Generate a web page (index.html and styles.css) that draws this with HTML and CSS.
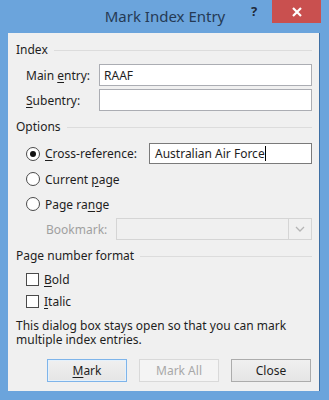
FILE: index.html
```html
<!DOCTYPE html>
<html>
<head>
<meta charset="utf-8">
<link rel="stylesheet" href="styles.css">
</head>
<body>
<div class="window">
  <div class="titlebar">
    <div class="title">Mark Index Entry</div>
    <div class="help">?</div>
    <div class="close">
      <svg width="12" height="10" viewBox="0 0 12 10"><path d="M2 1 L10 9 M10 1 L2 9" stroke="#fff" stroke-width="2.2" fill="none"/></svg>
    </div>
  </div>
  <div class="client">
    <div class="group"><span>Index</span><i class="rule"></i></div>
    <div class="row field first">
      <label class="lbl">Main <u>e</u>ntry:</label>
      <div class="input main">RAAF</div>
    </div>
    <div class="row field second">
      <label class="lbl"><u>S</u>ubentry:</label>
      <div class="input main"></div>
    </div>
    <div class="group options"><span>Options</span><i class="rule"></i></div>
    <div class="row xref">
      <span class="radio checked"></span>
      <span class="rtext"><u>C</u>ross-reference:</span>
      <div class="input xin">Australian Air Force<span class="caret"></span></div>
    </div>
    <div class="row opt cur">
      <span class="radio"></span>
      <span class="rtext">Current <u>p</u>age</span>
    </div>
    <div class="row opt range">
      <span class="radio"></span>
      <span class="rtext">Page ra<u>n</u>ge</span>
    </div>
    <div class="row bookmark">
      <span class="blabel">Bookmark:</span>
      <div class="select"><span class="arrow"><svg width="10" height="6" viewBox="0 0 10 6"><path d="M1 1 L5 5 L9 1" stroke="#b5b5b5" stroke-width="1.3" fill="none"/></svg></span></div>
    </div>
    <div class="group pnf"><span>Page number format</span><i class="rule"></i></div>
    <div class="row opt bold">
      <span class="check"></span>
      <span class="rtext"><u>B</u>old</span>
    </div>
    <div class="row opt italic">
      <span class="check"></span>
      <span class="rtext"><u>I</u>talic</span>
    </div>
    <p class="note">This dialog box stays open so that you can mark multiple index entries.</p>
    <div class="buttons">
      <div class="btn default"><u>M</u>ark</div>
      <div class="btn disabled">Mark All</div>
      <div class="btn">Close</div>
    </div>
  </div>
</div>
</body>
</html>
```
FILE: styles.css
```css
html, body {
  margin: 0;
  padding: 0;
}
body {
  width: 329px;
  height: 400px;
  overflow: hidden;
  font-family: "Noto Sans", "DejaVu Sans", sans-serif;
  font-size: 12px;
  color: #1e1e1e;
}
.window {
  width: 329px;
  height: 400px;
  background: #6ba4dc;
  display: flex;
  flex-direction: column;
}
.titlebar {
  height: 33px;
  position: relative;
  flex: none;
}
.title {
  position: absolute;
  left: 0;
  right: 0;
  top: 6px;
  text-align: center;
  font-size: 15px;
  color: #253a55;
  padding-left: 1px;
}
.help {
  position: absolute;
  left: 251px;
  top: 2px;
  font-weight: bold;
  font-size: 13px;
  color: #1f2a3a;
}
.close {
  position: absolute;
  left: 272px;
  top: 0;
  width: 49px;
  height: 23px;
  background: #c9504f;
  display: flex;
  align-items: center;
  justify-content: center;
}
.client {
  flex: none;
  margin: 0 9px 0 8px;
  height: 349px;
  background: #f0f0f0;
  padding: 9px 7px 9px 8px;
  box-sizing: border-box;
  height: 358px;
  border-right: 1px solid #3e6fa3;
}
.group {
  display: flex;
  align-items: center;
  height: 16px;
  line-height: 16px;
}
.group span {
  flex: none;
  margin-right: 6px;
}
.rule {
  flex: 1;
  height: 1px;
  background: #dcdcdc;
}
.row {
  display: flex;
  align-items: center;
  padding-left: 10px;
}
.field { height: 22px; }
.first { margin-top: 6px; }
.second { margin-top: 3px; }
.lbl {
  width: 73px;
  flex: none;
}
u {
  text-decoration: underline;
  text-underline-offset: 2px;
}
.input {
  height: 22px;
  box-sizing: border-box;
  border: 1px solid #abadb3;
  background: #fff;
  padding: 0 4px;
  line-height: 19px;
  display: flex;
  align-items: center;
}
.main { flex: 1; }
.options { margin-top: 8px; }
.xref { margin-top: 8px; height: 21px; }
.radio {
  width: 14px;
  height: 14px;
  box-sizing: border-box;
  border: 1px solid #4a4a4a;
  border-radius: 50%;
  background: #fff;
  flex: none;
  position: relative;
}
.radio.checked::after {
  content: "";
  position: absolute;
  left: 3px;
  top: 3px;
  width: 6px;
  height: 6px;
  border-radius: 50%;
  background: #111;
}
.rtext {
  margin-left: 5px;
}
.xref .rtext { width: 104px; flex: none; }
.xin {
  flex: 1;
  height: 21px;
  border-color: #7a7a7a;
  padding-left: 5px;
}
.caret {
  display: inline-block;
  width: 1px;
  height: 15px;
  background: #000;
}
.opt { height: 16px; }
.cur { margin-top: 7px; }
.range { margin-top: 9px; }
.bookmark {
  margin-top: 6px;
  height: 22px;
  padding-left: 30px;
}
.blabel {
  color: #a0a0a0;
  width: 70px;
  flex: none;
}
.select {
  flex: 1;
  height: 22px;
  box-sizing: border-box;
  border: 1px solid #d5d5d5;
  background: #f0f0f0;
  display: flex;
  justify-content: flex-end;
}
.arrow {
  width: 22px;
  border-left: 1px solid #d5d5d5;
  display: flex;
  align-items: center;
  justify-content: center;
}
.pnf { margin-top: 8px; }
.check {
  width: 13px;
  height: 13px;
  box-sizing: border-box;
  border: 1px solid #4a4a4a;
  background: #fff;
  flex: none;
}
.bold { margin-top: 7px; }
.italic { margin-top: 6px; }
.note {
  margin: 10px 0 0 0;
  line-height: 14px;
  width: 290px;
}
.buttons {
  margin-top: 12px;
  display: flex;
  justify-content: flex-end;
  gap: 12px;
  padding-right: 1px;
}
.btn {
  width: 80px;
  height: 23px;
  box-sizing: border-box;
  border: 1px solid #acacac;
  background: linear-gradient(#f0f0f0, #e5e5e5);
  display: flex;
  align-items: center;
  justify-content: center;
}
.btn.default {
  border-color: #7eb4ea;
  box-shadow: inset 0 0 0 1px #e5f1fb;
}
.btn.disabled {
  border-color: #d9d9d9;
  background: #f4f4f4;
  color: #a8a8a8;
}
```
